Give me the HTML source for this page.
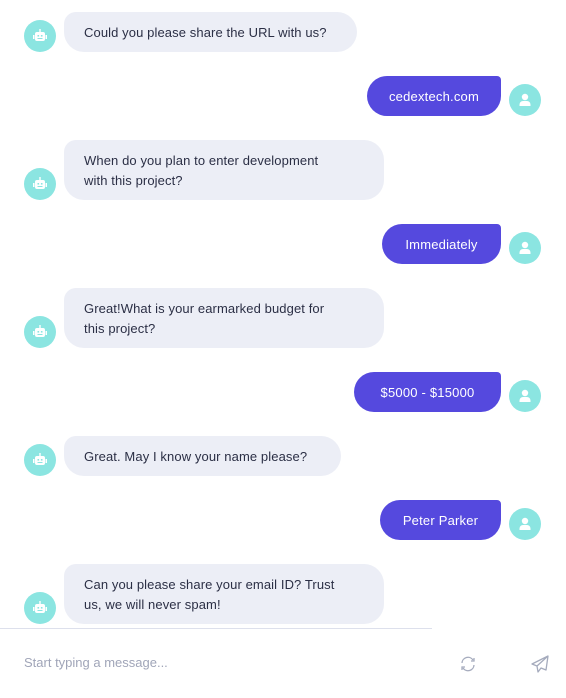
<!DOCTYPE html>
<html><head><meta charset="utf-8"><style>
body{margin:0;width:566px;height:698px;background:#fff;font-family:"Liberation Sans",sans-serif;position:relative;overflow:hidden}
.b{position:absolute;left:64px;background:#eceef6;color:#2b2f45;font-size:13px;line-height:20px;padding:11px 20px 9px;box-sizing:border-box;border-radius:12px 20px 20px 20px;white-space:nowrap;letter-spacing:0.1px}
.u{position:absolute;background:#5549de;color:#fff;font-size:13px;line-height:20px;padding:11px 0 9px;text-align:center;box-sizing:border-box;border-radius:20px 4px 20px 20px;letter-spacing:0.2px}
.av{position:absolute;width:32px;height:32px;border-radius:50%;background:#8be5e1}
.av svg{position:absolute;left:8px;top:8px}
</style></head><body>
<svg width="0" height="0" style="position:absolute"><defs>
<g id="bot"><rect x="3" y="4" width="10" height="9" rx="2" fill="#fff"/><rect x="7.3" y="1" width="1.4" height="3" fill="#fff"/><rect x="1" y="7" width="1.5" height="4" fill="#fff"/><rect x="13.5" y="7" width="1.5" height="4" fill="#fff"/><rect x="5.5" y="7" width="1.6" height="1.6" fill="#8be5e1"/><rect x="8.9" y="7" width="1.6" height="1.6" fill="#8be5e1"/><rect x="5.5" y="10" width="5" height="1" fill="#8be5e1"/></g>
<g id="usr"><circle cx="8" cy="5" r="3.2" fill="#fff"/><path d="M2.5 14v-1.5a3.5 3.5 0 0 1 3.5-3.5h4a3.5 3.5 0 0 1 3.5 3.5V14z" fill="#fff"/></g>
</defs></svg>

<div class="b" style="top:12px;width:293px;height:40px">Could you please share the URL with us?</div>
<div class="av" style="left:24px;top:20px"><svg width="16" height="16"><use href="#bot"/></svg></div>

<div class="u" style="top:76px;left:367px;width:134px;height:40px">cedextech.com</div>
<div class="av" style="left:509px;top:84px"><svg width="16" height="16"><use href="#usr"/></svg></div>

<div class="b" style="top:140px;width:320px;height:60px">When do you plan to enter development<br>with this project?</div>
<div class="av" style="left:24px;top:168px"><svg width="16" height="16"><use href="#bot"/></svg></div>

<div class="u" style="top:224px;left:382px;width:119px;height:40px">Immediately</div>
<div class="av" style="left:509px;top:232px"><svg width="16" height="16"><use href="#usr"/></svg></div>

<div class="b" style="top:288px;width:320px;height:60px">Great!What is your earmarked budget for<br>this project?</div>
<div class="av" style="left:24px;top:316px"><svg width="16" height="16"><use href="#bot"/></svg></div>

<div class="u" style="top:372px;left:354px;width:147px;height:40px">$5000 - $15000</div>
<div class="av" style="left:509px;top:380px"><svg width="16" height="16"><use href="#usr"/></svg></div>

<div class="b" style="top:436px;width:277px;height:40px">Great. May I know your name please?</div>
<div class="av" style="left:24px;top:444px"><svg width="16" height="16"><use href="#bot"/></svg></div>

<div class="u" style="top:500px;left:380px;width:121px;height:40px">Peter Parker</div>
<div class="av" style="left:509px;top:508px"><svg width="16" height="16"><use href="#usr"/></svg></div>

<div class="b" style="top:564px;width:320px;height:60px">Can you please share your email ID? Trust<br>us, we will never spam!</div>
<div class="av" style="left:24px;top:592px"><svg width="16" height="16"><use href="#bot"/></svg></div>

<div style="position:absolute;left:0;top:628px;width:432px;height:1px;background:#dde0ec"></div>
<div style="position:absolute;left:24px;top:655px;font-size:13px;color:#a0a5b8">Start typing a message...</div>
<svg style="position:absolute;left:459px;top:655px" width="18" height="18" viewBox="0 0 18 18" fill="none" stroke="#a5abbd" stroke-width="1.3"><path d="M3 8a6 6 0 0 1 11-3M15 3v3h-3M15 10a6 6 0 0 1-11 3M3 15v-3h3"/></svg>
<svg style="position:absolute;left:530px;top:655px" width="20" height="18" viewBox="0 0 20 18" fill="none" stroke="#a5abbd" stroke-width="1.3" stroke-linejoin="round"><path d="M18 1L2 9l5 2 1 6 3-4 5 2z M7 11L18 1"/></svg>
</body></html>
